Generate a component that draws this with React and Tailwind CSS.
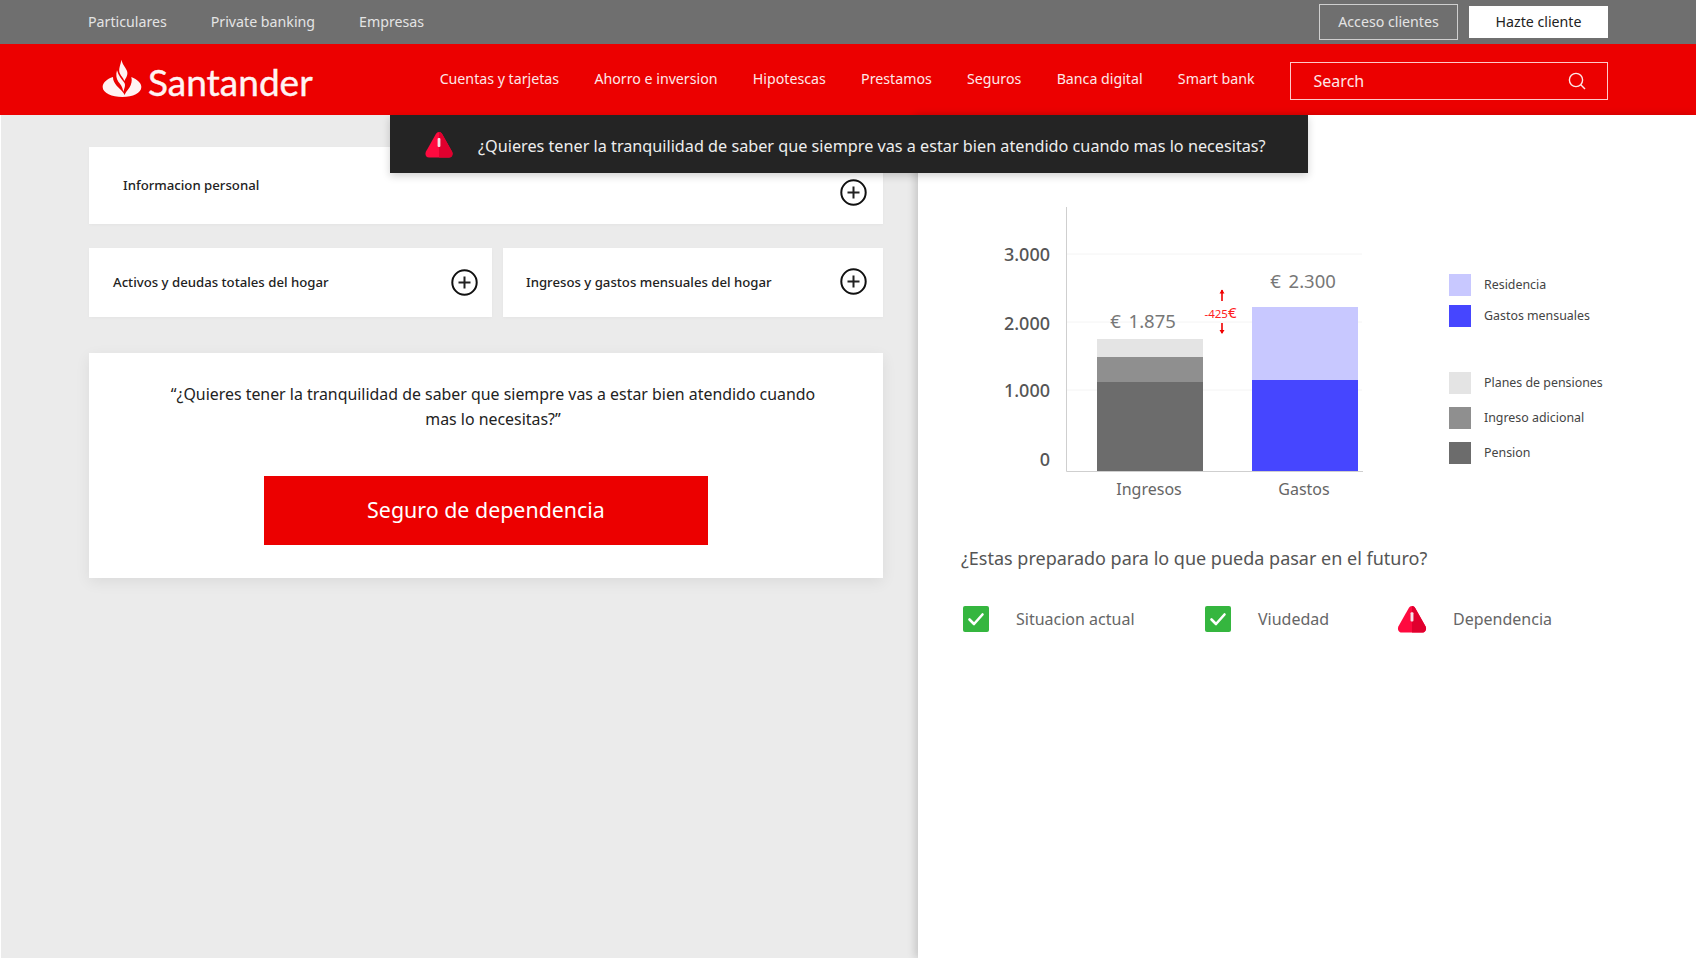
import React from "react";

const font = { fontFamily: '"Noto Sans", sans-serif' };

function Alert({ w = 28, h = 27, id }) {
  return (
    <svg width={w} height={h} viewBox="0 0 28 27" className="shrink-0">
      <defs>
        <clipPath id={id}>
          <rect x="14" y="0" width="14" height="27" />
        </clipPath>
      </defs>
      <path d="M14 1C12.6 1 11.6 1.8 10.9 3L1 20.4C-.4 23.2 1 26.5 4 26.5H24C27 26.5 28.4 23.2 27 20.4L17.1 3C16.4 1.8 15.4 1 14 1Z" fill="#ff0a3f" />
      <path d="M14 1C12.6 1 11.6 1.8 10.9 3L1 20.4C-.4 23.2 1 26.5 4 26.5H24C27 26.5 28.4 23.2 27 20.4L17.1 3C16.4 1.8 15.4 1 14 1Z" fill="#e0002e" clipPath={`url(#${id})`} />
      <rect x="12.6" y="7" width="2.8" height="9" rx="1" fill="#f4e3ea" />
    </svg>
  );
}

function Check() {
  return (
    <svg width="26" height="26" viewBox="0 0 26 26" className="shrink-0">
      <rect width="26" height="26" rx="2" fill="#35b63f" />
      <path d="M6.5 13.5L11 18L19.5 8.5" fill="none" stroke="#fff" strokeWidth="2.6" strokeLinecap="round" strokeLinejoin="round" />
    </svg>
  );
}

function Plus({ className = "" }) {
  return (
    <svg width="27" height="27" viewBox="0 0 27 27" className={`shrink-0 ${className}`}>
      <circle cx="13.5" cy="13.5" r="12.2" fill="#fff" stroke="#111" strokeWidth="2" />
      <path d="M13.5 7.5V19.5M7.5 13.5H19.5" stroke="#222" strokeWidth="2" />
    </svg>
  );
}

function Logo() {
  return (
    <div className="flex items-center">
      <svg width="50" height="46" viewBox="0 0 150 138" className="shrink-0">
        <path d="M45 60C26 66 14 78 14 90C14 108 42 120 73 120C105 120 130 108 130 90C130 78 118 68 100 60C103 72 100 82 94 92C88 100 82 106 80 114C76 104 66 96 56 86C50 78 45 72 45 60Z" fill="#fff3f3" />
        <path d="M70 8C68 24 61 34 65 48C69 58 76 62 79 72C84 62 91 54 87 42C83 30 74 24 70 8Z" fill="#fff3f3" />
        <path d="M57 40C53 54 55 66 61 74C68 82 73 88 76 104C80 92 84 84 78 76C72 68 61 56 57 40Z" fill="#fff3f3" />
      </svg>
      <span className="pt-[3px] text-[37px] leading-none text-[#fff3f3] [-webkit-text-stroke:0.4px_#fff3f3]" style={{ fontFamily: 'Lato, sans-serif' }}>Santander</span>
    </div>
  );
}

function Chart() {
  const axisText = "fill-[#555555] text-[18px] font-medium";
  const sumText = "fill-[#777777] text-[18.5px] [word-spacing:3px]";
  return (
    <svg width="400" height="300" viewBox="1000 200 400 300" className="shrink-0" style={font}>
      <path d="M1067 254H1362M1067 322H1362M1067 390H1362" stroke="#f4f4f4" strokeWidth="1" />
      <rect x="1097" y="339" width="106" height="18" fill="#e4e4e4" />
      <rect x="1097" y="357" width="106" height="25" fill="#8f8f8f" />
      <rect x="1097" y="382" width="106" height="89" fill="#6c6c6c" />
      <rect x="1252" y="307" width="106" height="73" fill="#c8c8ff" />
      <rect x="1252" y="380" width="106" height="91" fill="#4646ff" />
      <path d="M1066.5 207V471.5H1363" fill="none" stroke="#cfcfcf" strokeWidth="1" />
      <text x="1050" y="261" textAnchor="end" className={axisText}>3.000</text>
      <text x="1050" y="330" textAnchor="end" className={axisText}>2.000</text>
      <text x="1050" y="397" textAnchor="end" className={axisText}>1.000</text>
      <text x="1050" y="466" textAnchor="end" className={axisText}>0</text>
      <text x="1149" y="495" textAnchor="middle" className="fill-[#666666] text-[16px]">Ingresos</text>
      <text x="1304" y="495" textAnchor="middle" className="fill-[#666666] text-[16px]">Gastos</text>
      <text x="1143" y="328" textAnchor="middle" className={sumText}>€ 1.875</text>
      <text x="1303" y="288" textAnchor="middle" className={sumText}>€ 2.300</text>
      <text x="1220.5" y="318" textAnchor="middle" className="fill-[#ff2020] text-[11.5px]">-425<tspan className="text-[15px]">€</tspan></text>
      <path d="M1222 290V301M1222 323V333" stroke="#f00000" strokeWidth="1.6" />
      <path d="M1219.5 293.5L1222 289.5L1224.5 293.5ZM1219.5 330L1222 334L1224.5 330Z" fill="#f00000" />
    </svg>
  );
}

function Legend({ color, label, className = "" }) {
  return (
    <div className={`flex h-[22px] items-center gap-[13px] ${className}`}>
      <span className={`h-[22px] w-[22px] shrink-0 ${color}`} />
      <span className="text-[12.4px] text-[#444444]">{label}</span>
    </div>
  );
}

export default function App() {
  return (
    <div className="relative flex h-[958px] w-[1696px] flex-col overflow-hidden bg-white" style={font}>
      <div className="flex h-[44px] shrink-0 items-center bg-[#6f6f6f] pl-[88px] pr-[88px] text-[14.2px]">
        <div className="flex gap-[44px] text-[#e4e4e4]">
          <span>Particulares</span>
          <span>Private banking</span>
          <span>Empresas</span>
        </div>
        <div className="ml-auto flex items-center gap-[11px]">
          <div className="flex h-[36px] w-[139px] items-center justify-center border border-[#cfcfcf] pb-[1px] text-[#e4e4e4]">Acceso clientes</div>
          <div className="flex h-[32px] w-[139px] items-center justify-center bg-white pb-[1px] text-[#222222]">Hazte cliente</div>
        </div>
      </div>

      <div className="flex h-[71px] shrink-0 items-center bg-[#ec0000] pl-[98px] text-[14.2px] text-[#fde8e8]">
        <Logo />
        <nav className="ml-[127px] flex items-center gap-[35.3px] pb-[1px]">
          <span>Cuentas y tarjetas</span>
          <span>Ahorro e inversion</span>
          <span>Hipotescas</span>
          <span>Prestamos</span>
          <span>Seguros</span>
          <span>Banca digital</span>
          <span>Smart bank</span>
        </nav>
        <div className="ml-[35px] mt-[3px] flex h-[38px] w-[318px] items-center justify-between border border-[#ffc9c9] pl-[23px] pr-[21px] text-[16px]">
          <span>Search</span>
          <svg width="18" height="18" viewBox="0 0 18 18" fill="none" stroke="#fde8e8" strokeWidth="1.4">
            <circle cx="8" cy="8" r="6.6" />
            <path d="M12.8 12.8L17 17" />
          </svg>
        </div>
      </div>

      <div className="relative flex min-h-0 flex-1">
        <div className="absolute left-[390px] top-0 z-10 flex h-[58px] w-[918px] items-center gap-[25px] bg-[#242424] pl-[35px] text-[16.22px] text-[#eeeeee] shadow-[0_3px_8px_rgba(0,0,0,0.18)]">
          <Alert id="a1" />
          <span className="mt-[4px]">¿Quieres tener la tranquilidad de saber que siempre vas a estar bien atendido cuando mas lo necesitas?</span>
        </div>

        <div className="w-[918px] shrink-0 border-l border-white bg-[#ebebeb] pl-[88px] pt-[32px]">
          <div className="flex h-[77px] w-[794px] justify-between bg-white pl-[34px] pr-[16px] shadow-[0_1px_3px_rgba(0,0,0,0.03)]">
            <span className="mt-[28px] text-[13.2px] font-medium leading-[21px] text-[#222222]">Informacion personal</span>
            <Plus className="mt-[32px]" />
          </div>
          <div className="mt-[24px] flex w-[794px] gap-[11px]">
            <div className="flex h-[69px] w-[403px] items-center justify-between bg-white pl-[24px] pr-[14px] shadow-[0_1px_3px_rgba(0,0,0,0.03)]">
              <span className="text-[13.2px] font-medium text-[#222222]">Activos y deudas totales del hogar</span>
              <Plus />
            </div>
            <div className="flex h-[69px] w-[380px] items-center justify-between bg-white pl-[23px] pr-[16px] shadow-[0_1px_3px_rgba(0,0,0,0.03)]">
              <span className="text-[13.2px] font-medium text-[#222222]">Ingresos y gastos mensuales del hogar</span>
              <Plus className="mb-[3px]" />
            </div>
          </div>
          <div className="mt-[36px] h-[225px] w-[794px] bg-white pt-[29px] shadow-[0_4px_14px_rgba(0,0,0,0.07)]">
            <p className="ml-[74px] w-[660px] text-center text-[15.9px] leading-[25px] text-[#222222]">
              “¿Quieres tener la tranquilidad de saber que siempre vas a estar bien atendido cuando mas lo necesitas?”
            </p>
            <div className="ml-[175px] mt-[44px] flex h-[69px] w-[444px] items-center justify-center bg-[#ec0000] text-[21.4px] text-white">
              Seguro de dependencia
            </div>
          </div>
        </div>

        <div className="relative min-w-0 flex-1 bg-white pl-[43px] pt-[85px] shadow-[-3px_0_8px_rgba(0,0,0,0.16)]">
          <div className="ml-[39px] flex h-[300px]">
            <Chart />
            <div className="ml-[49px] pt-[74px]">
              <Legend color="bg-[#c8c8ff]" label="Residencia" />
              <Legend color="bg-[#4646ff]" label="Gastos mensuales" className="mt-[9px]" />
              <Legend color="bg-[#e4e4e4]" label="Planes de pensiones" className="mt-[45px]" />
              <Legend color="bg-[#8f8f8f]" label="Ingreso adicional" className="mt-[13px]" />
              <Legend color="bg-[#6c6c6c]" label="Pension" className="mt-[13px]" />
            </div>
          </div>
          <h2 className="mt-[44px] text-[18px] font-normal leading-[28px] text-[#555555]">¿Estas preparado para lo que pueda pasar en el futuro?</h2>
          <div className="ml-[2px] mt-[33px] flex h-[28px] items-center text-[16px] text-[#666666]">
            <div className="flex w-[242px] items-center gap-[27px]"><Check /><span>Situacion actual</span></div>
            <div className="flex w-[191px] items-center gap-[27px]"><Check /><span>Viudedad</span></div>
            <div className="flex items-center gap-[25px]"><Alert w={32} h={28} id="a2" /><span>Dependencia</span></div>
          </div>
        </div>
      </div>
    </div>
  );
}
